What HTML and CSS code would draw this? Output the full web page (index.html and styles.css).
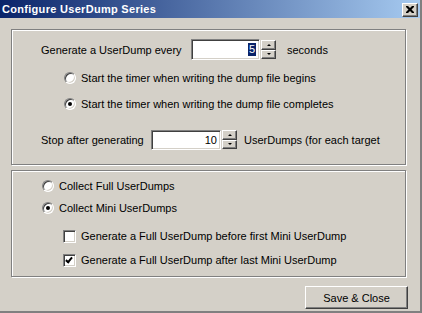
FILE: index.html
```html
<!DOCTYPE HTML>
<html lang="en-US">
<head>
    <meta charset="UTF-8">
    <title>Configure UserDump Series</title>
    <link rel="stylesheet" href="styles.css">
</head>
<body>
<div class="window">
    <div class="titlebar">
        <span class="title">Configure UserDump Series</span>
        <span class="close">
            <svg width="8" height="7" viewBox="0 0 8 7"><path d="M0 0h2l2 2 2-2h2v1l-2.5 2.5 2.5 2.5v1h-2l-2-2-2 2h-2v-1l2.5-2.5-2.5-2.5z" fill="#000"/></svg>
        </span>
    </div>

    <div class="group timer">
        <div class="row">
            <span class="label every">Generate a UserDump every</span>
            <span class="field"><span class="sel">5</span></span>
            <span class="spin"><span class="btn up"></span><span class="btn down"></span></span>
            <span class="unit">seconds</span>
        </div>
        <div class="option indent r1"><span class="radio"></span>Start the timer when writing the dump file begins</div>
        <div class="option indent r2"><span class="radio on"></span>Start the timer when writing the dump file completes</div>
        <div class="row stop">
            <span class="label after">Stop after generating</span>
            <span class="field short">10</span>
            <span class="spin"><span class="btn up"></span><span class="btn down"></span></span>
            <span class="unit">UserDumps (for each target</span>
        </div>
    </div>

    <div class="group kind">
        <div class="option"><span class="radio"></span>Collect Full UserDumps</div>
        <div class="option r2"><span class="radio on"></span>Collect Mini UserDumps</div>
        <div class="option check c1"><span class="box"></span>Generate a Full UserDump before first Mini UserDump</div>
        <div class="option check c2"><span class="box on"></span>Generate a Full UserDump after last Mini UserDump</div>
    </div>

    <div class="footer">
        <span class="button">Save &amp; Close</span>
    </div>
</div>
</body>
</html>
```

FILE: styles.css
```css
html, body {
    margin: 0;
    padding: 0;
    width: 422px;
    height: 313px;
    overflow: hidden;
}

body {
    background: #d4d0c8;
    font-family: "Liberation Sans", Arial, sans-serif;
    font-size: 11px;
    color: #000;
}

div.window {
    box-sizing: border-box;
    width: 422px;
    height: 313px;
    border-right: 2px solid #808080;
    border-bottom: 2px solid #808080;
    display: flex;
    flex-direction: column;
}

div.titlebar {
    height: 18px;
    display: flex;
    align-items: center;
    justify-content: space-between;
    padding: 0 2px 0 2px;
    background: linear-gradient(to right, #0a246a, #a6caf0);
}

span.title {
    color: #fff;
    font-weight: bold;
    font-size: 11px;
    letter-spacing: 0.3px;
}

span.close {
    box-sizing: border-box;
    width: 16px;
    height: 14px;
    margin-top: 1px;
    display: flex;
    align-items: center;
    justify-content: center;
    background: #d4d0c8;
    border: 1px solid;
    border-color: #fff #404040 #404040 #fff;
    box-shadow: inset -1px -1px 0 #808080;
}

/* etched group boxes */
div.group {
    box-sizing: border-box;
    width: 395px;
    margin-left: 11px;
    border: 1px solid #808080;
    box-shadow: 1px 1px 0 #fff, inset 1px 1px 0 #fff;
    display: flex;
    flex-direction: column;
}

div.timer {
    height: 136px;
    margin-top: 11px;
    padding: 9px 0 0 29px;
}

div.kind {
    height: 107px;
    margin-top: 5px;
    padding: 7px 0 0 30px;
}

div.row {
    display: flex;
    align-items: center;
    height: 21px;
}

div.row.stop {
    margin-top: 17px;
}

span.label.every {
    width: 150px;
}

span.label.after {
    width: 110px;
}

span.field {
    box-sizing: border-box;
    width: 69px;
    height: 21px;
    background: #fff;
    border: 1px solid;
    border-color: #808080 #fff #fff #808080;
    box-shadow: inset 1px 1px 0 #404040, inset -1px -1px 0 #d4d0c8;
    display: flex;
    align-items: center;
    justify-content: flex-end;
    padding-right: 3px;
}

span.field.short {
    width: 70px;
    height: 20px;
}

span.sel {
    background: #0a246a;
    color: #fff;
    padding: 0 1px;
    line-height: 13px;
}

span.spin {
    display: flex;
    flex-direction: column;
    margin-left: 1px;
    width: 15px;
    height: 19px;
}

span.btn {
    box-sizing: border-box;
    flex: 1;
    background: #d4d0c8;
    border: 1px solid;
    border-color: #fff #404040 #404040 #fff;
    box-shadow: inset -1px -1px 0 #808080;
    display: flex;
    align-items: center;
    justify-content: center;
}

span.btn::after {
    content: "";
    width: 0;
    height: 0;
    border-left: 2px solid transparent;
    border-right: 2px solid transparent;
}

span.up::after {
    border-bottom: 2px solid #000;
}

span.down::after {
    border-top: 2px solid #000;
}

span.unit {
    margin-left: 11px;
}

div.stop span.unit {
    margin-left: 7px;
}

div.option {
    display: flex;
    align-items: center;
    height: 16px;
}

div.indent {
    margin-left: 23px;
}

div.timer div.r1 {
    margin-top: 10px;
}

div.timer div.r2 {
    margin-top: 10px;
}

div.kind div.r2 {
    margin-top: 6px;
}

span.radio {
    box-sizing: border-box;
    width: 12px;
    height: 12px;
    margin-right: 5px;
    border-radius: 50%;
    background: #fff;
    border: 1px solid;
    border-color: #808080 #fff #fff #808080;
    box-shadow: inset 1px 1px 0 #404040, inset -1px -1px 0 #d4d0c8;
    display: flex;
    align-items: center;
    justify-content: center;
}

span.radio.on::after {
    content: "";
    width: 4px;
    height: 4px;
    border-radius: 50%;
    background: #000;
}

div.check {
    margin-left: 21px;
}

div.c1 {
    margin-top: 12px;
}

div.c2 {
    margin-top: 8px;
}

span.box {
    box-sizing: border-box;
    width: 13px;
    height: 13px;
    margin-right: 5px;
    background: #fff;
    border: 1px solid;
    border-color: #808080 #fff #fff #808080;
    box-shadow: inset 1px 1px 0 #404040, inset -1px -1px 0 #d4d0c8;
    position: relative;
}

span.box.on::after {
    content: "";
    position: absolute;
    left: 3px;
    top: 1px;
    width: 2px;
    height: 5px;
    border: solid #000;
    border-width: 0 2px 2px 0;
    transform: rotate(40deg);
}

div.footer {
    display: flex;
    justify-content: flex-end;
    padding-right: 12px;
    margin-top: 9px;
}

span.button {
    box-sizing: border-box;
    width: 103px;
    height: 23px;
    display: flex;
    align-items: center;
    justify-content: center;
    border: 1px solid;
    border-color: #fff #404040 #404040 #fff;
    box-shadow: inset -1px -1px 0 #808080;
}
```
